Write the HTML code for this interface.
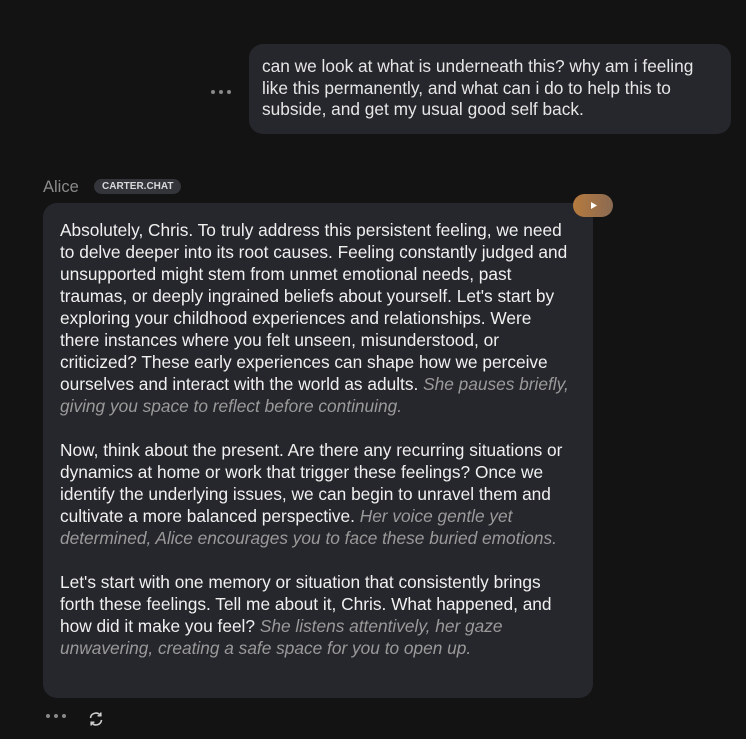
<!DOCTYPE html>
<html><head><style>
body{margin:0;background:#131313;width:746px;height:739px;overflow:hidden;font-family:"Liberation Sans",sans-serif;color:#ececec;position:relative}
.u{position:absolute;left:249px;top:44px;width:482px;height:90px;background:#26272c;border-radius:14px;box-sizing:border-box;padding:12px 13px;font-size:17.3px;line-height:21.5px;color:#e6e6e6;white-space:nowrap}
.dots{position:absolute;display:flex;gap:4px}
.dots i{width:4px;height:4px;border-radius:50%;background:#888;display:block}
.name{position:absolute;left:43px;top:178px;font-size:16.5px;color:#8a8a8a}
.tag{position:absolute;left:94px;top:179px;height:15px;padding:0 8px;border-radius:8px;background:#33353b;color:#d8d8d8;font-size:10px;font-weight:bold;line-height:15px}
.b{position:absolute;left:43px;top:203px;width:550px;height:495px;background:#26272c;border-radius:14px;box-sizing:border-box;padding:16px 17px;font-size:17.3px;line-height:22px;white-space:nowrap;color:#f0f0f0}
.b em{color:#9a9a9a}
.play{position:absolute;left:573px;top:194px;width:40px;height:23px;border-radius:12px;background:linear-gradient(90deg,#b67a3e,#8a6a52)}
</style></head><body>
<div class="dots" style="left:211px;top:90px"><i></i><i></i><i></i></div>
<div class="u">can we look at what is underneath this? why am i feeling<br>like this permanently, and what can i do to help this to<br>subside, and get my usual good self back.</div>
<div class="name">Alice</div>
<div class="tag">CARTER.CHAT</div>
<div class="b">Absolutely, Chris. To truly address this persistent feeling, we need<br>to delve deeper into its root causes. Feeling constantly judged and<br>unsupported might stem from unmet emotional needs, past<br>traumas, or deeply ingrained beliefs about yourself. Let's start by<br>exploring your childhood experiences and relationships. Were<br>there instances where you felt unseen, misunderstood, or<br>criticized? These early experiences can shape how we perceive<br>ourselves and interact with the world as adults. <em>She pauses briefly,<br>giving you space to reflect before continuing.</em><br><br>Now, think about the present. Are there any recurring situations or<br>dynamics at home or work that trigger these feelings? Once we<br>identify the underlying issues, we can begin to unravel them and<br>cultivate a more balanced perspective. <em>Her voice gentle yet<br>determined, Alice encourages you to face these buried emotions.</em><br><br>Let's start with one memory or situation that consistently brings<br>forth these feelings. Tell me about it, Chris. What happened, and<br>how did it make you feel? <em>She listens attentively, her gaze<br>unwavering, creating a safe space for you to open up.</em></div>
<div class="play"><svg width="40" height="23"><path d="M18 8l6 3.5-6 3.5z" fill="#fff"/></svg></div>
<div class="dots" style="left:46px;top:714px"><i></i><i></i><i></i></div>
<svg style="position:absolute;left:88px;top:711px" width="16" height="16" viewBox="0 0 16 16" fill="none" stroke="#ccc" stroke-width="1.6"><path d="M2.5 7A5.5 5.5 0 0 1 12.5 4.5M13.5 9A5.5 5.5 0 0 1 3.5 11.5"/><path d="M12.8 1.5v3.2H9.6M3.2 14.5v-3.2h3.2"/></svg>
</body></html>
